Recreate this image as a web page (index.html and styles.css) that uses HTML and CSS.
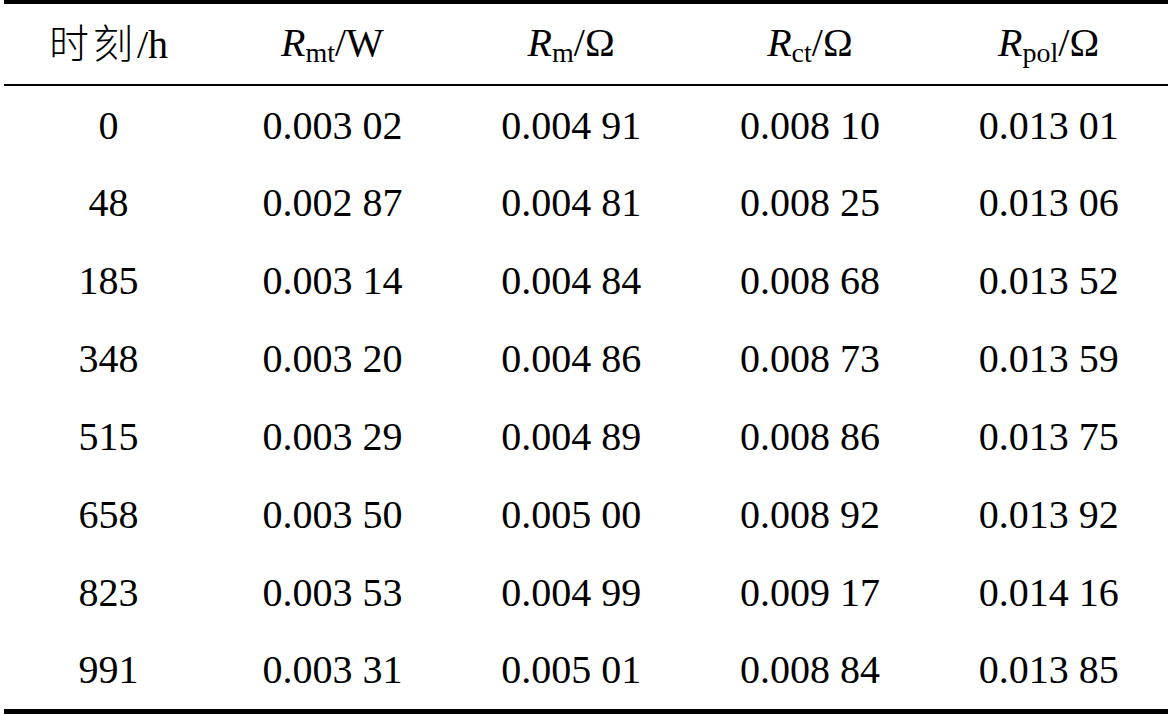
FILE: index.html
```html
<!DOCTYPE html>
<html>
<head>
<meta charset="utf-8">
<link rel="stylesheet" href="styles.css">
</head>
<body>
<table class="data">
  <colgroup>
    <col class="c1"><col class="cn"><col class="cn"><col class="cn"><col class="cn">
  </colgroup>
  <thead>
    <tr>
      <th><span class="cjk" lang="zh-CN">时刻</span>/h</th>
      <th><i>R</i><sub>mt</sub>/W</th>
      <th><i>R</i><sub>m</sub>/Ω</th>
      <th><i>R</i><sub>ct</sub>/Ω</th>
      <th><i>R</i><sub>pol</sub>/Ω</th>
    </tr>
  </thead>
  <tbody>
    <tr><td>0</td><td>0.003 02</td><td>0.004 91</td><td>0.008 10</td><td>0.013 01</td></tr>
    <tr><td>48</td><td>0.002 87</td><td>0.004 81</td><td>0.008 25</td><td>0.013 06</td></tr>
    <tr><td>185</td><td>0.003 14</td><td>0.004 84</td><td>0.008 68</td><td>0.013 52</td></tr>
    <tr><td>348</td><td>0.003 20</td><td>0.004 86</td><td>0.008 73</td><td>0.013 59</td></tr>
    <tr><td>515</td><td>0.003 29</td><td>0.004 89</td><td>0.008 86</td><td>0.013 75</td></tr>
    <tr><td>658</td><td>0.003 50</td><td>0.005 00</td><td>0.008 92</td><td>0.013 92</td></tr>
    <tr><td>823</td><td>0.003 53</td><td>0.004 99</td><td>0.009 17</td><td>0.014 16</td></tr>
    <tr><td>991</td><td>0.003 31</td><td>0.005 01</td><td>0.008 84</td><td>0.013 85</td></tr>
  </tbody>
</table>
</body>
</html>
```
FILE: styles.css
```css
html, body {
  margin: 0;
  padding: 0;
  background: #ffffff;
}
body {
  padding: 0 2px 0 4px;
  font-family: "Liberation Serif", serif;
  color: #000;
}
.data {
  width: 1164px;
  border-collapse: collapse;
  table-layout: fixed;
  font-family: "Liberation Serif", serif;
  font-size: 40px;
  border-top: 4px solid #000;
  border-bottom: 5px solid #000;
}
.c1 { width: 209px; }
.data th,
.data td {
  box-sizing: border-box;
  height: 78px;
  padding: 0;
  text-align: center;
  vertical-align: middle;
  font-weight: normal;
  white-space: pre;
  line-height: 1;
}
.data thead th {
  height: 83px;
  border-bottom: 2px solid #000;
  padding-bottom: 2px;
}
.data tbody td {
  height: 78px;
  padding-top: 2px;
}
.data tbody tr:last-child td {
  height: 80px;
  padding-top: 0;
}
.cjk {
  font-family: "Noto Sans CJK SC", sans-serif;
  font-weight: 300;
  letter-spacing: 4px;
}
.data sub {
  font-size: 28px;
  vertical-align: -6px;
  line-height: 0;
}
.data i {
  font-style: italic;
}
```
